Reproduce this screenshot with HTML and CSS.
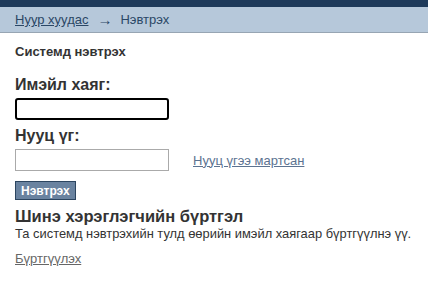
FILE: index.html
```html
<!DOCTYPE html>
<html lang="mn">
<head>
  <meta charset="UTF-8">
  <meta name="viewport" content="width=device-width, initial-scale=1.0">
  <title>Нэвтрэх</title>
  <link rel="stylesheet" href="styles.css">
</head>
<body>
  <div class="topbar"></div>
  <div class="crumbs">
    <a href="#">Нуур хуудас</a>
    <span class="arrow">&rarr;</span>
    <span>Нэвтрэх</span>
  </div>
  <div class="content">
    <h3 class="title">Системд нэвтрэх</h3>
    <form class="login">
      <label for="email">Имэйл хаяг:</label>
      <div class="row">
        <input type="text" id="email" class="field focused" autofocus>
      </div>
      <label for="password">Нууц үг:</label>
      <div class="row">
        <input type="password" id="password" class="field">
        <a href="#" class="forgot">Нууц үгээ мартсан</a>
      </div>
      <button type="button" class="submit">Нэвтрэх</button>
    </form>
    <h2 class="signup-title">Шинэ хэрэглэгчийн бүртгэл</h2>
    <p class="signup-text">Та системд нэвтрэхийн тулд өөрийн имэйл хаягаар бүртгүүлнэ үү.</p>
    <a href="#" class="signup-link">Бүртгүүлэх</a>
  </div>
</body>
</html>
```

FILE: styles.css
```css
body {
  font-family: "Liberation Sans", Arial, sans-serif;
  margin: 0;
  padding: 0;
  background-color: #fff;
  color: #333;
}
.topbar {
  height: 7px;
  background-color: #1e3a5a;
}
.crumbs {
  height: 25px;
  background-color: #b6c8da;
  border-bottom: 1px solid #97a5b3;
  padding-left: 15px;
  display: flex;
  align-items: center;
  font-size: 13px;
  color: #2b4766;
}
.crumbs a {
  color: #2b4766;
}
.crumbs .arrow {
  margin: 0 8px 0 9px;
  font-size: 15px;
}
.content {
  padding: 0 15px;
}
.title {
  font-size: 13px;
  font-weight: bold;
  margin: 11px 0 0;
  line-height: 15px;
}
.login {
  margin-top: 16px;
}
.login label {
  display: block;
  font-size: 16px;
  font-weight: bold;
  line-height: 20px;
}
.row {
  display: flex;
  align-items: center;
  margin: 3px 0 6px;
}
.field {
  box-sizing: border-box;
  width: 154px;
  height: 22px;
  border: 1px solid #aaa;
  margin: 0;
  padding: 0 2px;
  font-size: 13px;
}
.field.focused {
  border: 2px solid #000;
  border-radius: 3px;
  outline: none;
  caret-color: #000;
}
.forgot {
  margin-left: 24px;
  font-size: 13px;
  color: #5c7391;
}
.submit {
  margin-top: 4px;
  height: 19px;
  padding: 0 5px;
  background-color: #6a83a0;
  border: 1px solid #2c4560;
  color: #fff;
  font-family: "Liberation Sans", Arial, sans-serif;
  font-weight: bold;
  font-size: 12px;
}
.signup-title {
  font-size: 16.5px;
  margin: 7px 0 0;
  line-height: 19px;
}
.signup-text {
  font-size: 12.9px;
  margin: 0;
  line-height: 15px;
  white-space: nowrap;
}
.signup-link {
  display: inline-block;
  margin-top: 10px;
  font-size: 13px;
  color: #666;
}
```
